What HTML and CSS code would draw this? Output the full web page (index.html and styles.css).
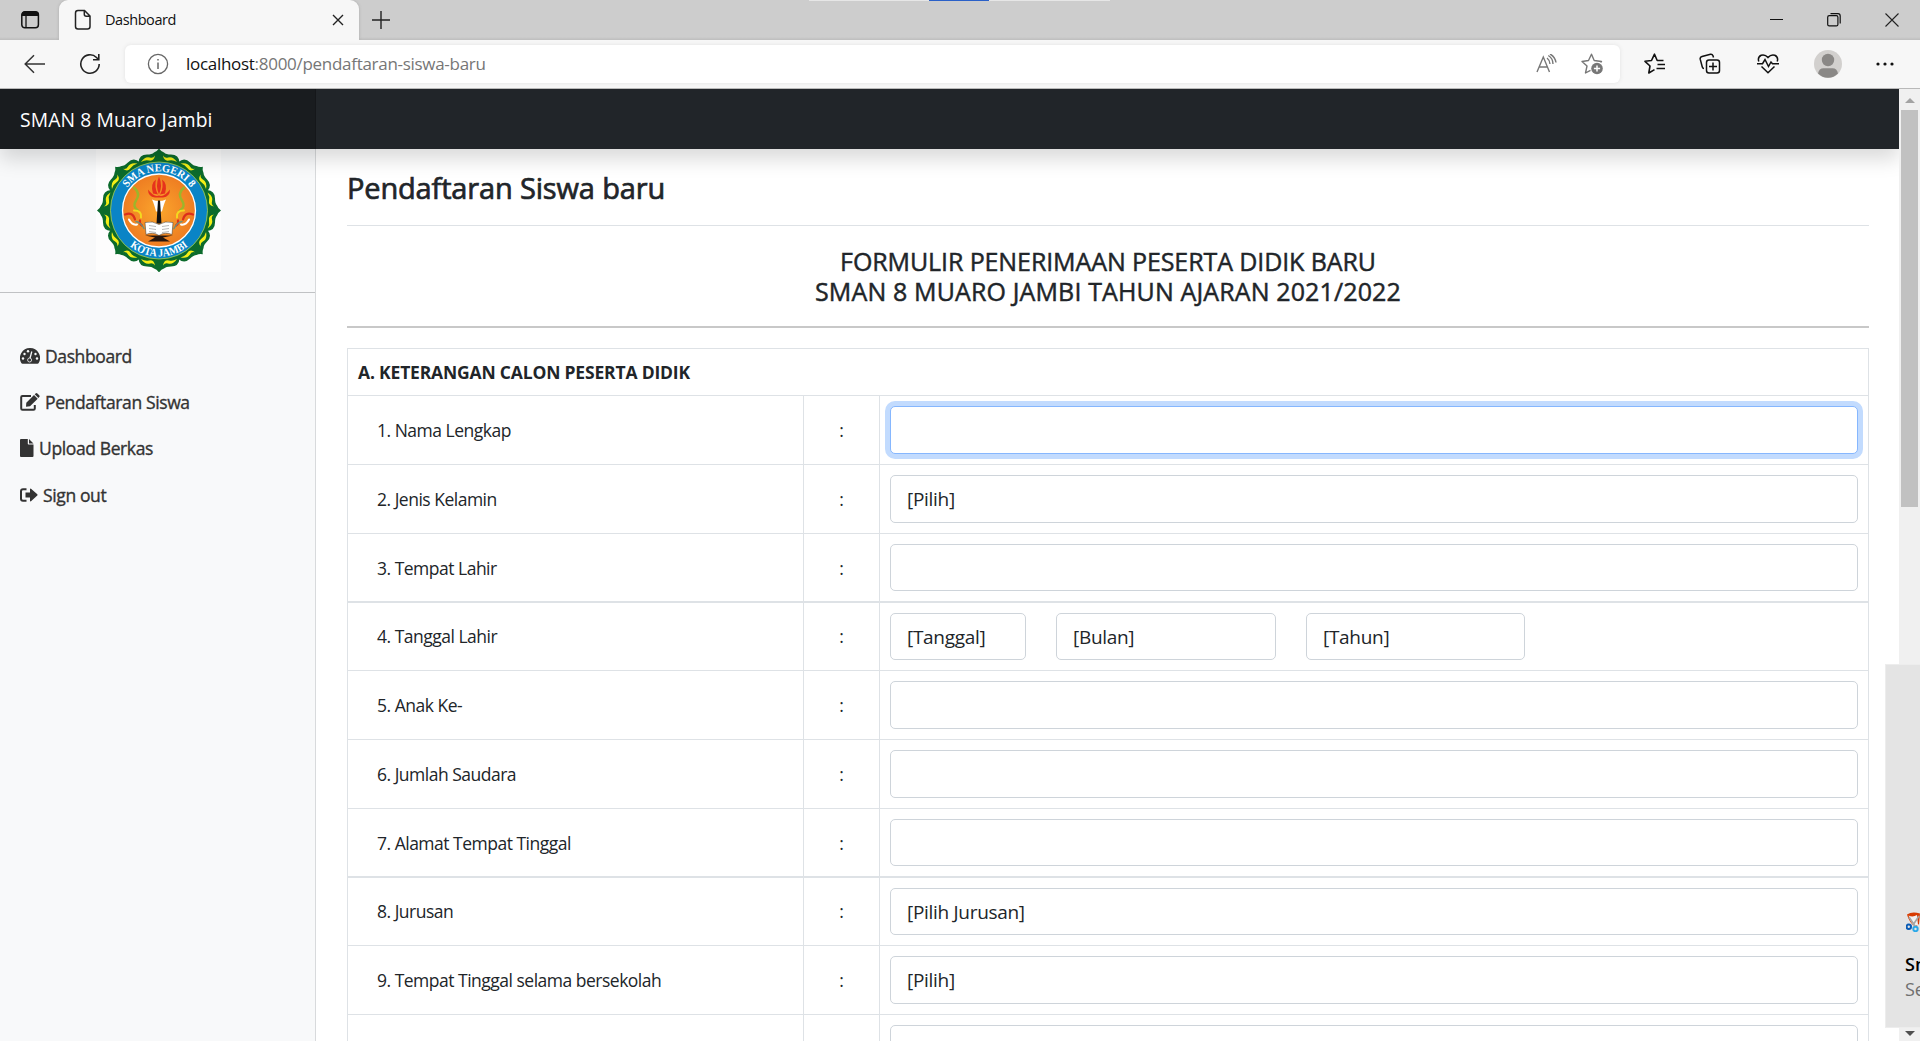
FILE: index.html
```html
<!DOCTYPE html>
<html lang="id">
<head>
<meta charset="utf-8">
<title>Dashboard</title>
<link rel="stylesheet" href="styles.css">
</head>
<body>
<div class="window">
  <div class="tabstrip">
    <svg class="tab-actions" width="20" height="20" viewBox="0 0 20 20"><rect x="1.8" y="1.8" width="16.6" height="16" rx="3" fill="none" stroke="#111" stroke-width="1.5"/><path d="M1.8 6V4.5Q1.8 1.5 4.8 1.5H15.2Q18.4 1.5 18.4 4.5V6Z" fill="#111"/><path d="M6 6V17.5" stroke="#111" stroke-width="1.3"/></svg>
    <div class="tab">
      <svg width="18" height="22" viewBox="0 0 18 22" fill="none" stroke="#222" stroke-width="1.5"><path d="M4 1.5H10.5L16 7V17.5Q16 20 13.5 20H4Q1.5 20 1.5 17.5V4Q1.5 1.5 4 1.5ZM10.3 1.5V5.2Q10.3 7.2 12.3 7.2H16"/></svg>
      <span class="tab-title">Dashboard</span>
      <svg class="tab-close" width="12" height="12" viewBox="0 0 12 12"><path d="M1 1L11 11M11 1L1 11" stroke="#222" stroke-width="1.4"/></svg>
    </div>
    <svg class="new-tab" width="18" height="18" viewBox="0 0 18 18"><path d="M9 0V18M0 9H18" stroke="#222" stroke-width="1.4"/></svg>
    <div class="task-hint"></div>
    <div class="controls">
      <svg width="13" height="13" viewBox="0 0 13 13"><path d="M0 6.5H13" stroke="#111"/></svg>
      <svg width="14" height="14" viewBox="0 0 14 14" fill="none" stroke="#111" stroke-width="1.2"><rect x=".7" y="2.7" width="10.2" height="10.2" rx="1.5"/><path d="M3.5 .7H11Q13.2 .7 13.2 3V10.5"/></svg>
      <svg width="14" height="14" viewBox="0 0 14 14"><path d="M.5 .5L13.5 13.5M13.5 .5L.5 13.5" stroke="#222" stroke-width="1.1"/></svg>
    </div>
  </div>
  <div class="toolbar">
    <svg class="back" width="22" height="20" viewBox="0 0 22 20" fill="none" stroke="#333" stroke-width="1.5"><path d="M21 10H1.5M10 1.2L1.2 10L10 18.8"/></svg>
    <svg class="reload" width="22" height="22" viewBox="0 0 22 22" fill="none" stroke="#222" stroke-width="1.6"><path d="M20.2 11A9.2 9.2 0 1 1 17.5 4.5L19.5 6.5M19.8 1V6.8H14"/></svg>
    <div class="address">
      <svg class="info" width="22" height="22" viewBox="0 0 22 22" fill="none" stroke="#666" stroke-width="1.3"><circle cx="11" cy="11" r="9.6"/><path d="M11 9.5V16M11 6V7.6" stroke-width="1.5"/></svg>
      <span class="url"><span class="host">localhost</span>:8000/pendaftaran-siswa-baru</span>
      <svg class="read" width="22" height="20" viewBox="0 0 22 20" fill="none" stroke="#777" stroke-width="1.4"><path d="M1 18L7.3 3L13.5 18M3.2 13H11.4M11 4Q13.7 6 14 10M12.3 1.5Q17 4.5 17 10M14 0Q19 2.5 20 8.5"/></svg>
      <svg class="fav" width="22" height="22" viewBox="0 0 22 22" fill="none" stroke="#777" stroke-width="1.4" stroke-linejoin="round"><path d="M19.5 9.5L20.5 8.5L13.2 7.5L10.5 1.2L7.5 7.5L1 8.5L6 13L4.5 20L9.5 17.3"/><circle cx="16" cy="15.5" r="5.8" fill="#777" stroke="none"/><path d="M16 12.4V18.6M12.9 15.5H19.1" stroke="#fff" stroke-width="1.5"/></svg>
    </div>
    <div class="tools">
      <svg width="22" height="22" viewBox="0 0 22 22" fill="none" stroke="#111" stroke-width="1.6" stroke-linejoin="round"><path d="M19.5 7.5H13.2L10.5 1.2L7.5 7.5L1 8.3L6 13L4.8 20L10.5 16.6M13.5 11.5H21M12.5 15.5H21" /></svg>
      <svg class="collections" width="22" height="22" viewBox="0 0 22 22" fill="none" stroke="#111" stroke-width="1.5"><rect x="7.5" y="7" width="13" height="13" rx="2.5"/><path d="M14 9.5V17.5M10 13.5H18M14.5 4.5L14 2.8Q13.3 1 11.5 1.3L3 3.5Q.8 4.2 1.2 6.2L3.3 14Q3.7 15.5 5 15.5"/></svg>
      <svg width="22" height="22" viewBox="0 0 22 22" fill="none" stroke="#111" stroke-width="1.5"><path d="M1.8 8.5Q.3 4 4.2 2.2Q8 1 11 4.5Q14 1 17.8 2.2Q21.7 4 20.2 8.5M0 10.7H5.5L8 6.5L11.5 13.5L14 9L15.5 10.7H22M4.5 13.5L11 19.7L17.5 13.5"/></svg>
      <svg width="28" height="28" viewBox="0 0 28 28"><circle cx="14" cy="14" r="14" fill="#d2d0ce"/><circle cx="14" cy="10" r="6.2" fill="#8a8886"/><path d="M4 23.5Q5 18.3 9.5 18.3H18.5Q23 18.3 24 23.5A14 14 0 0 1 4 23.5Z" fill="#8a8886"/></svg>
      <svg width="18" height="4" viewBox="0 0 18 4" fill="#111"><circle cx="2" cy="2" r="1.6"/><circle cx="9" cy="2" r="1.6"/><circle cx="16" cy="2" r="1.6"/></svg>
    </div>
  </div>
  <div class="viewport">
    <div class="page">
      <header class="navbar"><div class="brand">SMAN 8 Muaro Jambi</div></header>
      <div class="columns">
        <nav class="sidebar">
          <div class="logo-wrap">
            <svg class="logo" width="125" height="123" viewBox="-63 -61.5 125 123">
              <defs>
                <g id="petal"><path d="M0 0L-20.5 -48Q-20 -56 -12 -56Q-7 -56 -5 -58Q-2 -59 0 -62Q2 -59 5 -58Q7 -56 12 -56Q20 -56 20.5 -48Z" fill="#0c6b2c"/><path d="M-18 -48.500Q-14 -54.500 -9 -53Q-6 -52 -4 -55Q-5 -49 -10 -50Q-14 -51 -18 -48.500ZM18 -48.500Q14 -54.500 9 -53Q6 -52 4 -55Q5 -49 10 -50Q14 -51 18 -48.500Z" fill="#f4ee16"/></g>
                <radialGradient id="sun"><stop offset="0" stop-color="#fba52c"/><stop offset="1" stop-color="#ee7d22"/></radialGradient>
                <path id="arcTop" d="M-39 0A39 39 0 0 1 39 0"/>
                <path id="arcBottom" d="M-46 0A46 46 0 0 0 46 0"/>
              </defs>
              <rect x="-63" y="-62" width="125" height="124" fill="#fdfdfd"/>
              <use href="#petal"/><use href="#petal" transform="rotate(45)"/><use href="#petal" transform="rotate(90)"/><use href="#petal" transform="rotate(135)"/><use href="#petal" transform="rotate(180)"/><use href="#petal" transform="rotate(225)"/><use href="#petal" transform="rotate(270)"/><use href="#petal" transform="rotate(315)"/>
              <circle r="48.500" fill="#0a84c6" stroke="#a8cf4a" stroke-width=".8"/>
              <circle r="36.500" fill="url(#sun)" stroke="#fff" stroke-width="1.300"/>
              <text class="seal"><textPath href="#arcTop" startOffset="50%" text-anchor="middle" textLength="74" lengthAdjust="spacingAndGlyphs">SMA NEGERI 8</textPath></text>
              <text class="seal"><textPath href="#arcBottom" startOffset="50%" text-anchor="middle" textLength="63" lengthAdjust="spacingAndGlyphs">KOTA JAMBI</textPath></text>
              <path d="M-11 -21Q-5 -13 0 -15Q5 -13 11 -21Q11 -14 4 -13H-4Q-11 -14 -11 -21ZM-6 -17Q-9 -27 -3 -31Q-5 -23 -1 -16ZM6 -17Q9 -27 3 -31Q5 -23 1 -16ZM0 -34Q-4 -25 0 -16Q4 -25 0 -34Z" fill="#e6321c"/>
              <path d="M-7 -11Q0 -8 7 -11Q5 -7 3 1H-3Q-5 -7 -7 -11Z" fill="#fff"/>
              <path d="M-1 -10H1L2.500 13H-2.500Z" fill="#111"/>
              <path d="M-14 12Q-6 10 0 14Q6 10 14 12L13 24Q6 21 0 25Q-6 21 -13 24Z" fill="#fff" stroke="#333" stroke-width=".5"/>
              <path d="M-10 15L-3 16M-10 18L-3 19M-10 21L-3 22M10 15L3 16M10 18L3 19M10 21L3 22" stroke="#888" stroke-width=".6"/>
              <path d="M-14 25H14L4 27L11 31H-11L-4 27Z" fill="#26160e"/>
              <g id="vine" fill="none" stroke-linecap="round"><path d="M-25 -23Q-18 -17 -23 -10Q-27 -4 -21 0" stroke="#9db52a" stroke-width="2.400"/><path d="M-34 4Q-26 1 -24 9M-17 15Q-20 13 -19 10" stroke="#dc2f1c" stroke-width="2.200"/><path d="M-25 0Q-17 0 -18 7" stroke="#f3d91f" stroke-width="2"/><path d="M-30 9Q-27 15 -22 14" stroke="#fff" stroke-width="2"/><path d="M-23 11Q-18 12 -15 18" stroke="#708d77" stroke-width="1.500"/></g>
              <use href="#vine" transform="scale(-1 1)"/>
            </svg>
          </div>
          <ul class="menu">
            <li><svg width="20" height="16" viewBox="0 0 20 16"><path d="M10 0A10 10 0 0 0 1.300 15Q1.700 15.700 2.500 15.700H17.500Q18.300 15.700 18.700 15A10 10 0 0 0 10 0Z" fill="#333"/><path d="M11.800 3.500L9.800 11" stroke="#f8f9fa" stroke-width="1.300"/><g fill="#f8f9fa"><circle cx="8" cy="3.200" r="1.200"/><circle cx="4.500" cy="6" r="1.200"/><circle cx="3" cy="10.500" r="1.200"/><circle cx="15.500" cy="6" r="1.200"/><circle cx="17" cy="10.500" r="1.200"/></g><circle cx="9.600" cy="12" r="2" fill="#333" stroke="#f8f9fa" stroke-width=".8"/></svg>Dashboard</li>
            <li><svg width="20" height="18" viewBox="0 0 20 18"><path d="M11 3H2.500Q1.200 3 1.200 4.300V15.500Q1.200 16.800 2.500 16.800H13.500Q14.800 16.800 14.800 15.500V12" fill="none" stroke="#333" stroke-width="2"/><path d="M6.300 9.700L14 2L17.700 5.700L10 13.200L6 13.700ZM14.700 1.300L15.600 .5Q16.500 -.3 17.400 .5L19.200 2.300Q20.100 3.200 19.200 4.100L18.400 5Z" fill="#333"/></svg>Pendaftaran Siswa</li>
            <li><svg width="14" height="18" viewBox="0 0 14 18"><path d="M0 1Q0 0 1 0H7.800V4.800Q7.800 5.500 8.500 5.500H13.500V17Q13.500 18 12.500 18H1Q0 18 0 17ZM9 0L13.500 4.400H9Z" fill="#333"/></svg>Upload Berkas</li>
            <li><svg width="18" height="14" viewBox="0 0 18 14"><path d="M6.500 1.200H3Q1 1.200 1 3.200V10.800Q1 12.800 3 12.800H6.500" fill="none" stroke="#333" stroke-width="2"/><path d="M5.500 4.500H10V1Q10.200 .2 11 .7L17.300 6.300Q17.900 7 17.300 7.600L11 13.300Q10.200 13.700 10 13V9.500H5.500Z" fill="#333"/></svg>Sign out</li>
          </ul>
        </nav>
        <main class="content">
          <h1>Pendaftaran Siswa baru</h1>
          <h2><span>FORMULIR PENERIMAAN PESERTA DIDIK BARU</span><span class="school">SMAN 8 MUARO JAMBI TAHUN AJARAN 2021/2022</span></h2>
          <div class="form">
            <div class="section">A. KETERANGAN CALON PESERTA DIDIK</div>
            <div class="row"><label>1. Nama Lengkap</label><i>:</i><div class="field"><span class="control focused"></span></div></div>
            <div class="row"><label>2. Jenis Kelamin</label><i>:</i><div class="field"><span class="control">[Pilih]</span></div></div>
            <div class="row short"><label>3. Tempat Lahir</label><i>:</i><div class="field"><span class="control"></span></div></div>
            <div class="row thick"><label>4. Tanggal Lahir</label><i>:</i><div class="field"><span class="control day">[Tanggal]</span><span class="control month">[Bulan]</span><span class="control year">[Tahun]</span></div></div>
            <div class="row"><label>5. Anak Ke-</label><i>:</i><div class="field"><span class="control"></span></div></div>
            <div class="row"><label>6. Jumlah Saudara</label><i>:</i><div class="field"><span class="control"></span></div></div>
            <div class="row short"><label>7. Alamat Tempat Tinggal</label><i>:</i><div class="field"><span class="control"></span></div></div>
            <div class="row thick"><label>8. Jurusan</label><i>:</i><div class="field"><span class="control">[Pilih Jurusan]</span></div></div>
            <div class="row"><label>9. Tempat Tinggal selama bersekolah</label><i>:</i><div class="field"><span class="control">[Pilih]</span></div></div>
            <div class="row"><label></label><i></i><div class="field"><span class="control"></span></div></div>
          </div>
        </main>
      </div>
    </div>
    <div class="scrollbar"><span class="arrow up"></span><span class="thumb"></span><span class="arrow down"></span></div>
  </div>
  <aside class="toast">
    <svg width="28" height="20" viewBox="0 0 28 20"><path d="M1 2.500Q6 -1 14 1.500L13 12L9 15Q3 10 1 2.500Z" fill="#d83b01"/><path d="M2.500 3.500Q7 5.500 11 3L12 13L8 14Q4 9 2.500 3.500Z" fill="#f2f2f2"/><path d="M3 5L9 14M13 4L7 13" stroke="#a5a5a5" stroke-width="1.600"/><g fill="none" stroke-width="2"><circle cx="2.800" cy="14.800" r="2.200" stroke="#0a5bb5"/><circle cx="9.500" cy="17" r="2.200" stroke="#2ba8e8"/></g></svg>
    <strong>Sn</strong><span>Se</span>
  </aside>
</div>
</body>
</html>
```
FILE: styles.css
```css
* { box-sizing: border-box; }
body { margin: 0; font-family: "Open Sans", "Noto Sans", sans-serif; color: #212529; background: #fff; overflow: hidden; }
svg { display: block; flex: none; }

.window { position: relative; width: 1920px; height: 1041px; overflow: hidden; display: flex; flex-direction: column; }

.tabstrip { height: 40px; flex: none; display: flex; align-items: flex-start; background: linear-gradient(#cdcdcd 37px, #bdbdbd); }
.tab-actions { margin: 10px 0 0 20px; }
.tab { width: 300px; height: 40px; margin-left: 19px; padding: 0 15px 0 15px; background: #f7f7f7; border-radius: 9px 9px 0 0; box-shadow: 0 0 3px #aaa; display: flex; align-items: center; }
.tab-title { flex: 1; margin-left: 13px; padding-bottom: 1px; font-size: 14.500px; letter-spacing: -.43px; color: #111; }
.new-tab { margin: 11px 0 0 13px; }
.task-hint { width: 301px; height: 1px; margin-left: 419px; background: linear-gradient(90deg, #e6e6e6 120px, #2a60c8 120px 180px, #e6e6e6 180px); }
.controls { margin: 13px 21px 0 auto; display: flex; gap: 44px; }

.toolbar { height: 49px; flex: none; display: flex; align-items: center; background: #f7f7f7; border-bottom: 1px solid #b9b9b9; }
.back { margin-left: 24px; }
.reload { margin-left: 33px; }
.address { width: 1495px; height: 38px; margin-left: 24px; padding: 0 17px 0 22px; border-radius: 6px; background: #fff; box-shadow: 0 0 4px #e2e2e2; display: flex; align-items: center; }
.url { flex: 1; margin-left: 17px; padding-bottom: 2px; font-size: 17px; letter-spacing: -.29px; color: #767676; }
.host { color: #111; }
.fav { margin-left: 23px; }
.tools { flex: 1; display: flex; align-items: center; justify-content: space-between; padding: 0 26px 0 24px; }
.collections { margin: 0 2px 0 -2px; }

.viewport { flex: 1; min-height: 0; display: flex; }
.page { flex: 1; min-width: 0; display: flex; flex-direction: column; overflow: hidden; }
.navbar { position: relative; z-index: 1; height: 60px; flex: none; background: #212529; box-shadow: 0 10px 20px rgba(0, 0, 0, .15); }
.brand { width: 316px; height: 60px; padding-left: 20px; line-height: 61px; font-size: 19.300px; letter-spacing: .12px; color: #fff; background: #191c1f; border-right: 1px solid #15171a; }
.columns { flex: 1; min-height: 0; display: flex; }

.sidebar { width: 316px; flex: none; background: #f8f9fa; border-right: 1px solid #d8dadc; }
.logo-wrap { height: 144px; padding-left: 96px; border-bottom: 1px solid #c0c2c4; }
.seal { font: bold 11px "Liberation Serif", serif; fill: #fff; }
.menu { list-style: none; margin: 0; padding: 39.500px 0 0 20px; }
.menu li { height: 46.300px; display: flex; align-items: center; gap: 5px; font-size: 17.500px; letter-spacing: -.38px; color: #333; -webkit-text-stroke: .35px #333; }

.content { flex: 1; padding: 0 30px 0 31px; }
h1 { margin: 0; height: 77px; padding-top: 16px; border-bottom: 1px solid #dee2e6; font-size: 29px; line-height: 46px; font-weight: 400; letter-spacing: -.16px; -webkit-text-stroke: .7px #212529; }
h2 { margin: 0; height: 102px; padding-top: 20px; border-bottom: 2px solid #c8c8c8; font-size: 25px; line-height: 30px; font-weight: 400; letter-spacing: -.1px; text-align: center; white-space: nowrap; -webkit-text-stroke: .45px #212529; }
h2 span { display: block; height: 30px; }
.school { letter-spacing: .13px; }
.form { width: 1522px; margin-top: 20px; border: 1px solid #dee2e6; border-bottom: 0; font-size: 17.500px; }
.section { height: 46px; padding-left: 10px; line-height: 46px; font-weight: 700; letter-spacing: -.18px; }
.row { height: 69px; display: grid; grid-template-columns: 456px 76px 1fr; border-top: 1px solid #dee2e6; }
.row.short { height: 68px; }
.row.thick { border-top-width: 2px; }
.row label { padding-left: 29px; line-height: 69px; letter-spacing: -.5px; border-right: 1px solid #dee2e6; }
.row i { font-style: normal; text-align: center; line-height: 69px; border-right: 1px solid #dee2e6; }
.row.thick label, .row.thick i { line-height: 67px; }
.field { padding: 10px; display: flex; align-items: flex-start; gap: 30px; }
.control { width: 968px; height: 48px; padding-left: 16px; line-height: 47px; font-size: 19px; letter-spacing: -.3px; border: 1px solid #ced4da; border-radius: 5px; background: #fff; }
.short .control, .thick .control { height: 47px; line-height: 46px; }
.control.focused { border-color: #86b7fe; box-shadow: 0 0 0 5px #c2dbfe; }
.control.day { width: 136px; }
.control.month { width: 220px; }
.control.year { width: 219px; }

.scrollbar { width: 21px; flex: none; padding: 9px 2px 5px; background: #f0f0f0; display: flex; flex-direction: column; align-items: center; }
.arrow { border: 5px solid transparent; border-top: 0; }
.arrow.up { border-bottom-color: #a3a3a3; }
.arrow.down { margin-top: auto; border-top: 5px solid #505050; border-bottom: 0; }
.thumb { width: 17px; height: 397px; margin-top: 7px; background: #c1c1c1; }

.toast { position: absolute; left: 1885px; top: 664px; width: 260px; height: 364px; padding: 247px 0 0 19px; background: #e4e4e4; border: 1px solid #ededed; font-size: 18px; line-height: 25px; display: flex; flex-direction: column; }
.toast svg { margin-left: 1px; margin-bottom: 20px; }
.toast strong { color: #000; font-weight: 600; }
.toast span { color: #707070; }
```
